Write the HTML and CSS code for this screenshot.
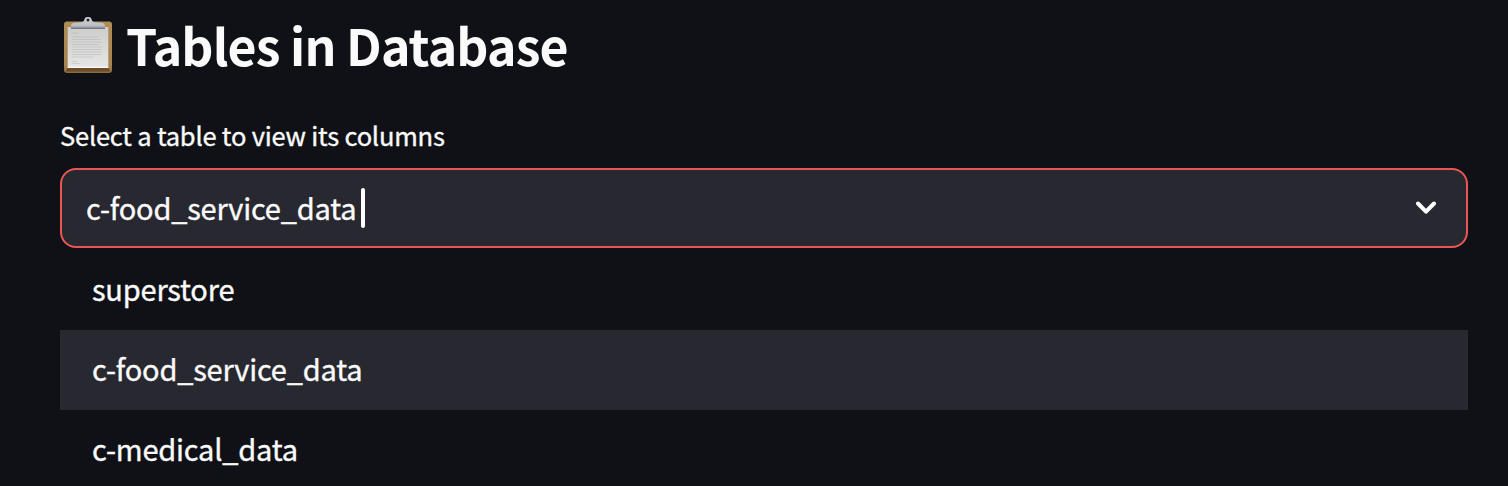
FILE: index.html
```html
<!DOCTYPE html>
<html lang="en">
<head>
<meta charset="utf-8">
<title>Tables in Database</title>
<link rel="stylesheet" href="styles.css">
</head>
<body>
<main class="page">
  <h1 class="heading">
    <svg class="clipboard" viewBox="0 0 50 60" aria-hidden="true">
      <defs>
        <linearGradient id="wood" x2="0" y2="1"><stop offset="0" stop-color="#b18d55"/><stop offset=".85" stop-color="#a8844e"/><stop offset="1" stop-color="#8a6a3c"/></linearGradient>
        <linearGradient id="paper" x2="0" y2="1"><stop offset="0" stop-color="#cdcdce"/><stop offset="1" stop-color="#e6e6e7"/></linearGradient>
        <linearGradient id="metal" x2="0" y2="1"><stop offset="0" stop-color="#d5d9df"/><stop offset=".8" stop-color="#b9bec5"/><stop offset="1" stop-color="#85888d"/></linearGradient>
      </defs>
      <rect x="1" y="4.500" width="48" height="51.500" rx="3" fill="url(#wood)"/>
      <path d="M4.500 51h41l1.500 3.500H3z" fill="#6d4b24"/>
      <path d="M4.700 10h40.600v41H4.700z" fill="url(#paper)"/>
      <path d="M4.700 49.700h40.600v1H4.700z" fill="#fff"/>
      <g stroke="#a5a5a7" stroke-width=".9" opacity=".4">
        <path d="M8.500 16h6M8.500 20h26M8.500 22.500h29M8.500 25h30M8.500 27.500h28M8.500 30h31M8.500 32.500h30M8.500 35h31M8.500 37.500h29M8.500 40h22M8.500 44.500h6M8.500 46.500h9"/>
      </g>
      <path d="M8 11.300h34" stroke="#77797d" stroke-width="1.200"/>
      <path d="M8 11V9Q8 6 12 5.800L16 5.500Q21 5 21.300 3Q21.500 0 25 0T28.700 3Q29 5 34 5.500L38 5.800Q42 6 42 9V11Z" fill="url(#metal)"/>
      <circle cx="25" cy="3" r="1.500" fill="#22252b"/>
    </svg>
    <span class="title">Tables in Database</span>
  </h1>
  <label class="label" for="table-select">Select a table to view its columns</label>
  <div class="select" id="table-select">
    <span class="value">c-food_service_data</span><span class="caret"></span>
    <svg class="chevron" viewBox="0 0 22 14" aria-hidden="true"><path d="M3 2.500 11 10.700 19 2.500"/></svg>
  </div>
  <ul class="options">
    <li class="option">superstore</li>
    <li class="option active">c-food_service_data</li>
    <li class="option">c-medical_data</li>
  </ul>
</main>
</body>
</html>
```
FILE: styles.css
```css
* { box-sizing: border-box; }
body {
  margin: 0;
  height: 486px;
  overflow: hidden;
  background: #101116;
  color: #fafafa;
  font-family: "Noto Sans CJK SC", "Noto Sans", sans-serif;
}
.page {
  display: flex;
  flex-direction: column;
  padding: 16px 40px 0 60px;
  white-space: nowrap;
}
.heading {
  display: flex;
  align-items: flex-start;
  height: 64px;
  margin: 0;
  font-size: 50px;
  font-weight: 700;
  line-height: 56px;
  letter-spacing: -.87px;
}
.clipboard { width: 50px; height: 60px; margin: 1px 13px 0 3px; }
.label {
  height: 40px;
  margin: 36px 0 12px;
  font-size: 25.500px;
  line-height: 38px;
  letter-spacing: -.21px;
  -webkit-text-stroke: .35px #fafafa;
}
.select {
  display: flex;
  align-items: center;
  height: 80px;
  padding: 0 29px 0 24px;
  border: 2px solid #ea5753;
  border-radius: 16px;
  background: #282830;
  font-size: 29px;
  letter-spacing: -.21px;
}
.value { height: 44px; line-height: 42px; -webkit-text-stroke: .35px #fafafa; }
.caret { width: 4px; height: 40px; margin-left: 5px; border-radius: 2px; background: #fff; }
.chevron { width: 22px; height: 14px; margin: 0 0 0 auto; }
.chevron path { fill: none; stroke: #fff; stroke-width: 4; stroke-linecap: round; stroke-linejoin: round; }
.options {
  height: 238px;
  margin: 0;
  padding: 2px 0 0;
  list-style: none;
  font-size: 29px;
  letter-spacing: -.21px;
  -webkit-text-stroke: .35px #fafafa;
}
.option { height: 80px; padding-left: 32px; line-height: 76px; }
.active { background: #282830; }
```
